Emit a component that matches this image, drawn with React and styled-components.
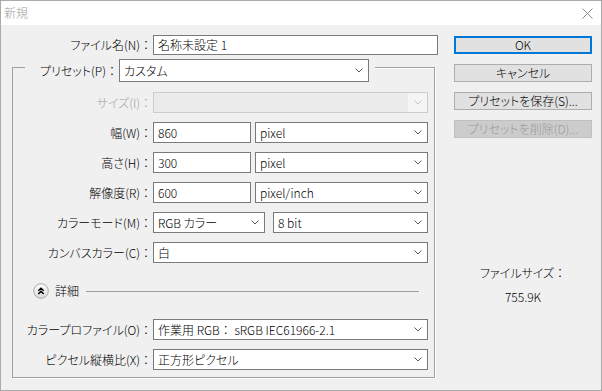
import styled, { createGlobalStyle } from 'styled-components';

const GlobalStyle = createGlobalStyle`
  html, body {
    margin: 0;
    padding: 0;
    background: #ffffff;
  }
  body {
    font-family: "Noto Sans CJK JP", "Noto Sans", sans-serif;
    font-size: 12px;
    font-weight: 300;
    color: #000;
    font-feature-settings: "palt";
  }
  * { box-sizing: border-box; }
`;

const Window = styled.div`
  width: 602px;
  height: 391px;
  border: 1px solid #aaaaaa;
  background: #f0f0f0;
  display: flex;
  flex-direction: column;
`;

const TitleBar = styled.div`
  height: 24px;
  flex: none;
  background: #fff;
  display: flex;
  align-items: center;
  justify-content: space-between;
  padding: 0 8px 0 3px;
  color: #9a9a9a;
  line-height: 1;
`;

const Body = styled.div`
  flex: 1;
  display: flex;
  gap: 16px;
  padding: 10px 9px 0 11px;
`;

const LeftCol = styled.div`
  width: 426px;
  display: flex;
  flex-direction: column;
`;

const RightCol = styled.div`
  width: 138px;
  padding-top: 1px;
  display: flex;
  flex-direction: column;
  gap: 10px;
`;

const FileRow = styled.div`
  display: grid;
  grid-template-columns: 140px 285px;
  column-gap: 1px;
  height: 20px;
`;

const Label = styled.label`
  display: flex;
  align-items: center;
  justify-content: flex-end;
  white-space: nowrap;
  line-height: 1;
  color: ${(p) => (p.disabled ? '#a3a3a3' : '#000')};
`;

/* full-width colon keeps its 1em cell, as in the Windows UI font */
const Colon = styled.span`
  font-feature-settings: normal;
`;

const TextBox = styled.div`
  height: ${(p) => p.h || 20}px;
  width: ${(p) => (p.w ? `${p.w}px` : 'auto')};
  flex: ${(p) => (p.w ? 'none' : '1')};
  border: 1px solid #7a7a7a;
  background: #fff;
  display: flex;
  align-items: center;
  padding-left: 4px;
  line-height: 1;
  white-space: nowrap;
`;

const Combo = styled.div`
  height: ${(p) => p.h || 21}px;
  width: ${(p) => (p.w ? `${p.w}px` : 'auto')};
  flex: ${(p) => (p.w ? 'none' : '1')};
  border: 1px solid ${(p) => (p.disabled ? '#cccccc' : '#7a7a7a')};
  background: ${(p) => (p.disabled ? '#ebebeb' : '#fff')};
  display: flex;
  align-items: center;
  justify-content: space-between;
  padding-left: 4px;
  line-height: 1;
  white-space: pre;
`;

const ChevronCell = styled.span`
  align-self: stretch;
  width: 19px;
  display: flex;
  align-items: center;
  justify-content: center;
  background: ${(p) => (p.disabled ? '#f5f5f5' : 'transparent')};
`;

const Group = styled.div`
  width: 423px;
  margin-top: 4px;
  display: flex;
  flex-direction: column;
`;

const GroupHeader = styled.div`
  height: 23px;
  display: flex;
`;

const LineLeft = styled.div`
  width: 13px;
  margin-top: 8px;
  border-top: 1px solid #a0a0a0;
  border-left: 1px solid #a0a0a0;
`;

const LineRight = styled.div`
  flex: 1;
  margin: 8px 0 0 6px;
  border-top: 1px solid #a0a0a0;
  border-right: 1px solid #a0a0a0;
  box-shadow: 1px 0 0 #fff, inset 0 1px 0 #fff;
`;

const PresetLabel = styled(Label)`
  width: 94px;
  padding-right: 1px;
`;

const GroupBody = styled.div`
  border: 1px solid #a0a0a0;
  border-top: none;
  box-shadow: 1px 1px 0 #fff;
  padding: 10px 6px 7px 0;
  display: flex;
  flex-direction: column;
  gap: 9px;
`;

const Row = styled.div`
  display: grid;
  grid-template-columns: 139px 275px;
  column-gap: 1px;
  height: 21px;
`;

const Controls = styled.div`
  display: flex;
  gap: ${(p) => p.gap || 0}px;
`;

const DetailsRow = styled.div`
  height: 16px;
  margin: 11px 9px 11px 20px;
  display: flex;
  align-items: center;
  gap: 6px;
  line-height: 1;
`;

const Rule = styled.div`
  flex: 1;
  margin-left: 1px;
  border-top: 1px solid #a0a0a0;
`;

const Button = styled.div`
  height: 18px;
  display: flex;
  align-items: center;
  justify-content: center;
  line-height: 1;
  white-space: nowrap;
  background: ${(p) => (p.disabled ? '#cccccc' : '#e1e1e1')};
  color: ${(p) => (p.disabled ? '#9a9a9a' : '#000')};
  border: ${(p) =>
    p.primary ? '2px solid #0078d7' : p.disabled ? '1px solid #bfbfbf' : '1px solid #adadad'};
`;

const FileSize = styled.div`
  margin-top: 117px;
  display: flex;
  flex-direction: column;
  align-items: center;
  gap: 8px;
  line-height: 16px;
`;

const Chevron = ({ color = '#5a5a5a' }) => (
  <svg width="8" height="5" viewBox="0 0 8 5">
    <path d="M0.5 0.5 L4 4 L7.5 0.5" stroke={color} strokeWidth="1" fill="none" />
  </svg>
);

const Select = ({ children, disabled, ...rest }) => (
  <Combo disabled={disabled} {...rest}>
    <span>{children}</span>
    <ChevronCell disabled={disabled}>
      <Chevron color={disabled ? '#c4c4c4' : '#5a5a5a'} />
    </ChevronCell>
  </Combo>
);

const CloseIcon = () => (
  <svg width="11" height="11" viewBox="0 0 11 11">
    <path d="M0.5 0.5 L10.5 10.5 M10.5 0.5 L0.5 10.5" stroke="#8a8a8a" strokeWidth="1" />
  </svg>
);

const CollapseIcon = () => (
  <svg width="16" height="16" viewBox="0 0 16 16">
    <defs>
      <linearGradient id="cg" x1="0" y1="0" x2="0" y2="1">
        <stop offset="0" stopColor="#ffffff" />
        <stop offset="1" stopColor="#dadada" />
      </linearGradient>
    </defs>
    <circle cx="8" cy="8" r="7.3" fill="url(#cg)" stroke="#a8a8a8" />
    <path
      d="M5.3 7.8 L8 5.2 L10.7 7.8 M5.3 11 L8 8.4 L10.7 11"
      stroke="#000"
      strokeWidth="1.5"
      fill="none"
    />
  </svg>
);

const FieldLabel = ({ children, ...rest }) => (
  <Label {...rest}>
    {children}
    <Colon>：</Colon>
  </Label>
);

const rows = [
  { label: '幅(W)', value: '860', unit: 'pixel' },
  { label: '高さ(H)', value: '300', unit: 'pixel' },
  { label: '解像度(R)', value: '600', unit: 'pixel/inch' },
];

export default function App() {
  return (
    <>
      <GlobalStyle />
      <Window>
        <TitleBar>
          <span>新規</span>
          <CloseIcon />
        </TitleBar>
        <Body>
          <LeftCol>
            <FileRow>
              <FieldLabel>ファイル名(N)</FieldLabel>
              <TextBox>名称未設定 1</TextBox>
            </FileRow>

            <Group>
              <GroupHeader>
                <LineLeft />
                <PresetLabel>
                  プリセット(P)<Colon>：</Colon>
                </PresetLabel>
                <Select w={250} h={23}>カスタム</Select>
                <LineRight />
              </GroupHeader>
              <GroupBody>
                <Row>
                  <FieldLabel disabled>サイズ(I)</FieldLabel>
                  <Select disabled />
                </Row>
                {rows.map((r) => (
                  <Row key={r.label}>
                    <FieldLabel>{r.label}</FieldLabel>
                    <Controls gap={4}>
                      <TextBox w={98} h={21}>{r.value}</TextBox>
                      <Select>{r.unit}</Select>
                    </Controls>
                  </Row>
                ))}
                <Row>
                  <FieldLabel>カラーモード(M)</FieldLabel>
                  <Controls gap={8}>
                    <Select w={112}>RGB カラー</Select>
                    <Select>8 bit</Select>
                  </Controls>
                </Row>
                <Row>
                  <FieldLabel>カンバスカラー(C)</FieldLabel>
                  <Select>白</Select>
                </Row>
                <DetailsRow>
                  <CollapseIcon />
                  <span>詳細</span>
                  <Rule />
                </DetailsRow>
                <Row>
                  <FieldLabel>カラープロファイル(O)</FieldLabel>
                  <Select>
                    作業用 RGB<Colon>：</Colon> sRGB IEC61966-2.1
                  </Select>
                </Row>
                <Row>
                  <FieldLabel>ピクセル縦横比(X)</FieldLabel>
                  <Select>正方形ピクセル</Select>
                </Row>
              </GroupBody>
            </Group>
          </LeftCol>

          <RightCol>
            <Button primary>OK</Button>
            <Button>キャンセル</Button>
            <Button>プリセットを保存(S)...</Button>
            <Button disabled>プリセットを削除(D)...</Button>
            <FileSize>
              <span>
                ファイルサイズ<Colon>：</Colon>
              </span>
              <span>755.9K</span>
            </FileSize>
          </RightCol>
        </Body>
      </Window>
    </>
  );
}
